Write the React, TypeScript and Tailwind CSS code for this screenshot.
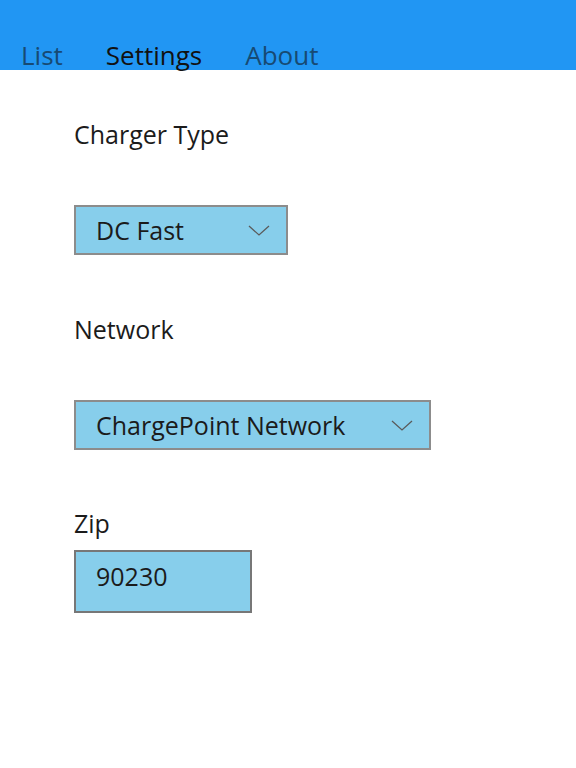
function Chevron() {
  return (
    <svg width="22" height="11" viewBox="0 0 22 11" fill="none" className="shrink-0">
      <polyline points="1,1 11,10 21,1" stroke="#5a5a5a" strokeWidth="1.3" />
    </svg>
  );
}

function Dropdown({ value, width }: { value: string; width: string }) {
  return (
    <div
      className={`${width} h-[50px] bg-[#87ceeb] border-2 border-[#8c8c8c] flex items-center justify-between pl-[20px] pr-[16px]`}
    >
      <span className="text-[25px] leading-none text-[#1b1b1b]">{value}</span>
      <Chevron />
    </div>
  );
}

export default function App() {
  return (
    <div className="w-[576px] h-[768px] bg-white" style={{ fontFamily: '"Open Sans", "Noto Sans", sans-serif' }}>
      <div className="h-[70px] bg-[#2196f3] flex items-end gap-[43px] pl-[21px]">
        <span className="text-[26px] leading-none pb-[2px] text-[#174a73]">List</span>
        <span className="text-[26px] leading-none pb-[2px] text-[#111]">Settings</span>
        <span className="text-[26px] leading-none pb-[2px] text-[#174a73]">About</span>
      </div>

      <div className="pl-[74px] flex flex-col">
        <label className="mt-[48px] text-[25px] leading-[32px] text-[#1b1b1b]">Charger Type</label>
        <div className="mt-[55px]">
          <Dropdown value="DC Fast" width="w-[214px]" />
        </div>

        <label className="mt-[58px] text-[25px] leading-[32px] text-[#1b1b1b]">Network</label>
        <div className="mt-[55px]">
          <Dropdown value="ChargePoint Network" width="w-[357px]" />
        </div>

        <label className="mt-[57px] text-[25px] leading-[32px] text-[#1b1b1b]">Zip</label>
        <div className="mt-[11px] w-[178px] h-[63px] bg-[#87ceeb] border-2 border-[#777] pl-[20px] pt-[6px]">
          <span className="text-[25px] text-[#1b1b1b]">90230</span>
        </div>
      </div>
    </div>
  );
}
